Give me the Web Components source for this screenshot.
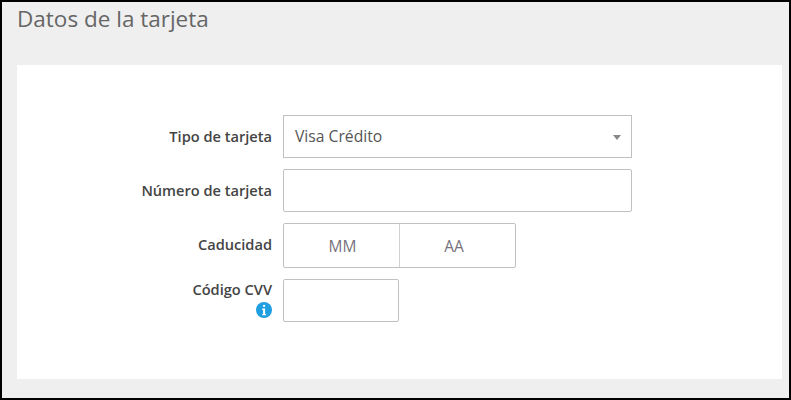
<!DOCTYPE html>
<html lang="es">
<head>
<meta charset="utf-8">
<title>Datos de la tarjeta</title>
<style>
  html, body { margin: 0; background: #000; }
  body { font-family: "Open Sans", "Liberation Sans", sans-serif; }
</style>
</head>
<body>
<card-panel heading="Datos de la tarjeta">
  <form-row label="Tipo de tarjeta" style="--row-h:43px; --row-gap:11px">
    <select-box value="Visa Crédito"></select-box>
  </form-row>
  <form-row label="Número de tarjeta" style="--row-h:43px; --row-gap:11px">
    <text-box style="width:349px"></text-box>
  </form-row>
  <form-row label="Caducidad" style="--row-h:45px; --row-gap:11px">
    <date-box></date-box>
  </form-row>
  <form-row label="Código CVV" info style="--row-h:43px; --row-gap:0px; --label-top:1px">
    <text-box style="width:116px"></text-box>
  </form-row>
</card-panel>

<script>
// card-panel: grey frame + title + white body
class CardPanel extends HTMLElement {
  constructor() {
    super();
    this.attachShadow({ mode: "open" });
  }
  connectedCallback() {
    this.shadowRoot.innerHTML = `
      <style>
        :host {
          box-sizing: border-box;
          width: 791px;
          height: 400px;
          border: 2px solid #000;
          background: #efefef;
          padding: 0 7px 19px 15px;
          display: flex;
          flex-direction: column;
          overflow: hidden;
        }
        h2 {
          margin: 0;
          height: 63px;
          flex: none;
          font-size: 22.5px;
          line-height: 33px;
          font-weight: 400;
          color: #666;
        }
        .body {
          flex: 1;
          background: #fff;
          padding-top: 50px;
        }
      </style>
      <h2>${this.getAttribute("heading")}</h2>
      <div class="body"><slot></slot></div>
    `;
  }
}

// form-row: right aligned label + control
class FormRow extends HTMLElement {
  constructor() {
    super();
    this.attachShadow({ mode: "open" });
  }
  connectedCallback() {
    const info = this.hasAttribute("info") ? `
      <svg class="info" width="16" height="16" viewBox="0 0 16 16" aria-hidden="true">
        <circle cx="8" cy="8" r="8" fill="#1f9fe0"/>
        <rect x="7" y="2.8" width="2.2" height="2.2" rx="1" fill="#fff"/>
        <path d="M6.2 6.6h2.9v5.4h.9v1.3H6.2V12h.9V7.9h-.9z" fill="#fff"/>
      </svg>` : "";
    this.shadowRoot.innerHTML = `
      <style>
        :host {
          display: flex;
          gap: 11px;
          height: var(--row-h);
          margin-bottom: var(--row-gap);
        }
        .label {
          width: 255px;
          flex: none;
          text-align: right;
          padding-top: var(--label-top, 12px);
          font-size: 14.6px;
          line-height: 19px;
          font-weight: 600;
          color: #444;
        }
        .info { display: block; margin: 3px 0 0 auto; }
      </style>
      <div class="label">${this.getAttribute("label")}${info}</div>
      <slot></slot>
    `;
  }
}

class SelectBox extends HTMLElement {
  constructor() {
    super();
    this.attachShadow({ mode: "open" });
  }
  connectedCallback() {
    this.shadowRoot.innerHTML = `
      <style>
        :host {
          display: flex;
          align-items: center;
          justify-content: space-between;
          box-sizing: border-box;
          width: 349px;
          height: 43px;
          padding: 0 10px 2px 11px;
          border: 1px solid #c0c0c0;
          font-size: 15.7px;
          color: #555;
        }
        .arrow {
          width: 0;
          height: 0;
          border-left: 4px solid transparent;
          border-right: 4px solid transparent;
          border-top: 5px solid #888;
          margin-top: 4px;
        }
      </style>
      <span>${this.getAttribute("value")}</span>
      <span class="arrow"></span>
    `;
  }
}

class TextBox extends HTMLElement {
  constructor() {
    super();
    this.attachShadow({ mode: "open" });
  }
  connectedCallback() {
    this.shadowRoot.innerHTML = `
      <style>
        :host {
          display: block;
          box-sizing: border-box;
          height: 43px;
          border: 1px solid #c0c0c0;
          border-radius: 2px;
          background: #fff;
        }
      </style>
    `;
  }
}

class DateBox extends HTMLElement {
  constructor() {
    super();
    this.attachShadow({ mode: "open" });
  }
  connectedCallback() {
    this.shadowRoot.innerHTML = `
      <style>
        :host {
          display: flex;
          box-sizing: border-box;
          width: 233px;
          height: 45px;
          border: 1px solid #c0c0c0;
          border-radius: 2px;
          font-size: 15.5px;
          color: #77727d;
        }
        span {
          box-sizing: border-box;
          display: flex;
          align-items: center;
          justify-content: center;
        }
        .mm { width: 115px; padding-left: 2px; }
        .aa { width: 116px; border-left: 1px solid #d0d0d0; padding-right: 7px; }
      </style>
      <span class="mm">MM</span><span class="aa">AA</span>
    `;
  }
}

customElements.define("card-panel", CardPanel);
customElements.define("form-row", FormRow);
customElements.define("select-box", SelectBox);
customElements.define("text-box", TextBox);
customElements.define("date-box", DateBox);
</script>
</body>
</html>
